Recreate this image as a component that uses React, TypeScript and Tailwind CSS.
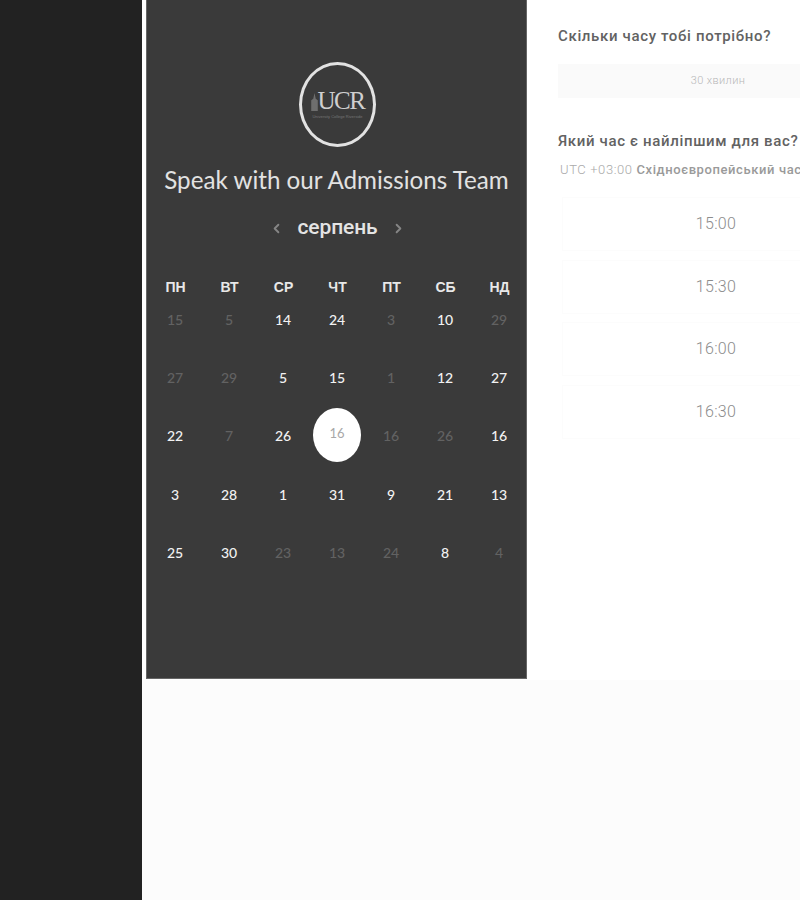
import { ChevronLeft, ChevronRight } from "lucide-react";

type Day = { n: number; muted?: boolean; selected?: boolean };

const weekdays = ["ПН", "ВТ", "СР", "ЧТ", "ПТ", "СБ", "НД"];

const weeks: Day[][] = [
  [{ n: 15, muted: true }, { n: 5, muted: true }, { n: 14 }, { n: 24 }, { n: 3, muted: true }, { n: 10 }, { n: 29, muted: true }],
  [{ n: 27, muted: true }, { n: 29, muted: true }, { n: 5 }, { n: 15 }, { n: 1, muted: true }, { n: 12 }, { n: 27 }],
  [{ n: 22 }, { n: 7, muted: true }, { n: 26 }, { n: 16, selected: true }, { n: 16, muted: true }, { n: 26, muted: true }, { n: 16 }],
  [{ n: 3 }, { n: 28 }, { n: 1 }, { n: 31 }, { n: 9 }, { n: 21 }, { n: 13 }],
  [{ n: 25 }, { n: 30 }, { n: 23, muted: true }, { n: 13, muted: true }, { n: 24, muted: true }, { n: 8 }, { n: 4, muted: true }],
];

const slots = ["15:00", "15:30", "16:00", "16:30"];

function Logo() {
  return (
    <div className="ml-[2px] flex h-[85px] w-[77px] flex-col items-center justify-center rounded-[50%] border-[3px] border-[#e2e2e2]">
      <div className="flex items-end">
        <svg width="7" height="18" viewBox="0 0 8 22" className="mb-[3px] text-[#6e6e6e]">
          <path d="M4 0 L5.5 7 L8 9 V22 H0 V9 L2.5 7 Z" fill="currentColor" />
        </svg>
        <span className="font-['Liberation_Serif',serif] text-[25px] leading-[26px] tracking-[-1.5px] text-[#cfcfcf]">UCR</span>
      </div>
      <span className="mb-[3px] whitespace-nowrap font-['Liberation_Sans',sans-serif] text-[4px] leading-[5px] text-[#777]">
        University College Riverside
      </span>
    </div>
  );
}

function Calendar() {
  return (
    <section className="flex h-[679px] w-[381px] shrink-0 flex-col items-center border border-t-0 border-[#666] bg-[#3a3a3a] pt-[62px]">
      <Logo />
      <h1 className="mt-[17px] whitespace-nowrap font-['Lato',sans-serif] text-[24.2px] leading-[32px] text-[#e2e2e2]">
        Speak with our Admissions Team
      </h1>
      <div className="mt-[16px] flex h-8 items-center gap-[13px] pl-[2px]">
        <ChevronLeft size={15} strokeWidth={3} className="text-[#858585]" />
        <span className="font-['Roboto',sans-serif] text-[21px] font-medium tracking-[-0.1px] text-[#e4e4e4]">серпень</span>
        <ChevronRight size={15} strokeWidth={3} className="text-[#858585]" />
      </div>
      <div className="mt-[33px] ml-[2px] grid w-[378px] grid-cols-7 font-['Liberation_Sans',sans-serif] text-[14px] font-bold text-[#e8e8e8]">
        {weekdays.map((d) => (
          <div key={d} className="text-center leading-[20px]">{d}</div>
        ))}
      </div>
      <div className="mt-[13px] ml-[1px] grid w-[378px] grid-cols-7 font-['Lato',sans-serif] text-[14px] font-medium">
        {weeks.flat().map((d, i) => (
          <div key={i} className="flex h-[58.2px] items-start justify-center">
            {d.selected ? (
              <span className="-mt-[18px] flex h-[54px] w-[48px] items-center justify-center rounded-[50%] bg-white pb-[3px] text-[13px] font-normal text-[#a8a8a8]">
                {d.n}
              </span>
            ) : (
              <span className={d.muted ? "leading-[20px] text-[#626262]" : "leading-[20px] text-[#f2f2f2]"}>{d.n}</span>
            )}
          </div>
        ))}
      </div>
    </section>
  );
}

function Schedule() {
  return (
    <section className="w-[320px] shrink-0 pl-[31px] pt-[26px] font-['Roboto',sans-serif]">
      <h2 className="whitespace-nowrap text-[15px] font-medium leading-[20px] tracking-[0.65px] text-[#626262]">Скільки часу тобі потрібно?</h2>
      <div className="mt-[18px] flex h-[34px] w-[320px] items-center justify-center bg-[#fafafa] text-[11px] font-light tracking-[0.4px] text-[#b8b8b8]">
        30 хвилин
      </div>
      <h2 className="mt-[33px] whitespace-nowrap text-[15px] font-medium leading-[20px] tracking-[0.65px] text-[#626262]">Який час є найліпшим для вас?</h2>
      <p className="ml-[2px] mt-[11px] whitespace-nowrap text-[13px] font-light leading-[16px] tracking-[0.6px] text-[#aaaaaa]">
        UTC +03:00 <span className="font-medium text-[#9a9a9a]">Східноєвропейський час</span>
      </p>
      <div className="ml-[4px] mt-[19px] flex w-[308px] flex-col gap-[8.5px]">
        {slots.map((s) => (
          <div key={s} className="flex h-[54px] items-center justify-center border border-[#fcfcfc] text-[16px] font-light tracking-[0.3px] text-[#8c8c8c]">
            {s}
          </div>
        ))}
      </div>
    </section>
  );
}

export default function App() {
  return (
    <div className="flex h-[900px] w-[800px] overflow-hidden bg-[#fcfcfc]">
      <aside className="w-[142px] shrink-0 bg-[#222222]" />
      <main className="flex-1 overflow-hidden">
        <div className="flex h-[680px] bg-white pl-[4px]">
          <Calendar />
          <Schedule />
        </div>
      </main>
    </div>
  );
}
